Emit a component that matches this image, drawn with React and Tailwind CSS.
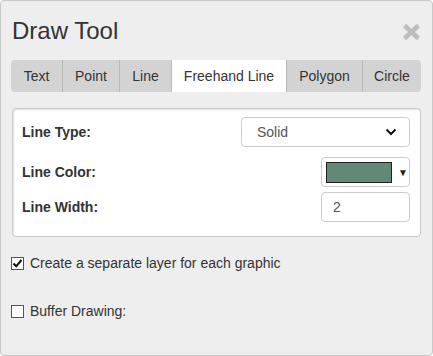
import { useState } from 'react'

const tabs = [
    { label: 'Text', w: 'w-[51px]' },
    { label: 'Point', w: 'w-[57px]' },
    { label: 'Line', w: 'w-[52px]' },
    { label: 'Freehand Line', w: 'w-[115px]' },
    { label: 'Polygon', w: 'w-[76px]' },
    { label: 'Circle', w: 'w-[59px]' },
]

function Check({ checked }) {
    return (
        <span className="w-[13px] h-[13px] border border-[#555] bg-white flex items-center justify-center shrink-0">
            {checked && (
                <svg width="11" height="11" viewBox="0 0 11 11">
                    <path d="M1.5 5.5 L4.2 8.3 L9.5 2" fill="none" stroke="#111" strokeWidth="2" />
                </svg>
            )}
        </span>
    )
}

export default function App() {
    const [active, setActive] = useState('Freehand Line')

    return (
        <div className="w-[433px] h-[356px] bg-[#eeeeee] border border-[#c8c8c8] rounded-[4px] text-[#333] font-['Liberation_Sans',Arial,sans-serif]">
            {/* Header */}
            <div className="flex items-center justify-between pl-[11px] pr-[11px] pt-[16px]">
                <h1 className="text-[24px] leading-[27px] font-normal text-[#333]">Draw Tool</h1>
                <svg width="19" height="18" viewBox="0 0 19 18" className="mt-[3px]">
                    <path d="M2.5 2.5 L16.5 15.5 M16.5 2.5 L2.5 15.5" stroke="#bdbdbd" strokeWidth="4.5" />
                </svg>
            </div>

            {/* Tabs */}
            <div className="flex ml-[10px] mt-[16px] h-[32px] rounded-[4px] overflow-hidden w-[410px]">
                {tabs.map((t, i) => (
                    <button
                        key={t.label}
                        onClick={() => setActive(t.label)}
                        className={
                            t.w +
                            ' h-full text-[14px] text-[#333] flex items-center justify-center ' +
                            (i > 0 ? 'border-l border-[#b9b9b9] ' : '') +
                            (active === t.label ? 'bg-white' : 'bg-[#d3d3d3]')
                        }
                    >
                        {t.label}
                    </button>
                ))}
            </div>

            {/* Options box */}
            <div className="ml-[11px] mt-[16px] w-[409px] bg-white border border-[#c9c9c9] rounded-[4px] shadow-[inset_1px_1px_2px_rgba(0,0,0,0.12)] pt-[8px] pb-[14px] pl-[9px] pr-[10px] flex flex-col">
                <div className="flex items-center justify-between h-[30px]">
                    <span className="text-[14px] font-bold">Line Type:</span>
                    <div className="w-[169px] h-[30px] border border-[#ccc] rounded-[4px] bg-white flex items-center justify-between pl-[15px] pr-[12px] text-[14px] text-[#555]">
                        <span>Solid</span>
                        <svg width="12" height="8" viewBox="0 0 12 8">
                            <path d="M1.5 1.5 L6 6 L10.5 1.5" fill="none" stroke="#111" strokeWidth="2" />
                        </svg>
                    </div>
                </div>
                <div className="flex items-center justify-between h-[30px] mt-[10px]">
                    <span className="text-[14px] font-bold">Line Color:</span>
                    <div className="w-[89px] h-[30px] border border-[#ccc] rounded-[4px] bg-white flex items-center pl-[4px]">
                        <span className="w-[66px] h-[21px] bg-[#628878] border border-[#222]"></span>
                        <span className="ml-[6px] text-[10px] text-[#222]">▼</span>
                    </div>
                </div>
                <div className="flex items-center justify-between h-[30px] mt-[5px]">
                    <span className="text-[14px] font-bold">Line Width:</span>
                    <div className="w-[89px] h-[30px] border border-[#ccc] rounded-[4px] bg-white flex items-center pl-[11px] text-[14px] text-[#555]">
                        2
                    </div>
                </div>
            </div>

            {/* Checkboxes */}
            <label className="flex items-center gap-[6px] ml-[10px] mt-[16px] h-[20px] text-[14px]">
                <Check checked />
                <span>Create a separate layer for each graphic</span>
            </label>
            <label className="flex items-center gap-[6px] ml-[10px] mt-[28px] h-[20px] text-[14px]">
                <Check />
                <span>Buffer Drawing:</span>
            </label>
        </div>
    )
}
